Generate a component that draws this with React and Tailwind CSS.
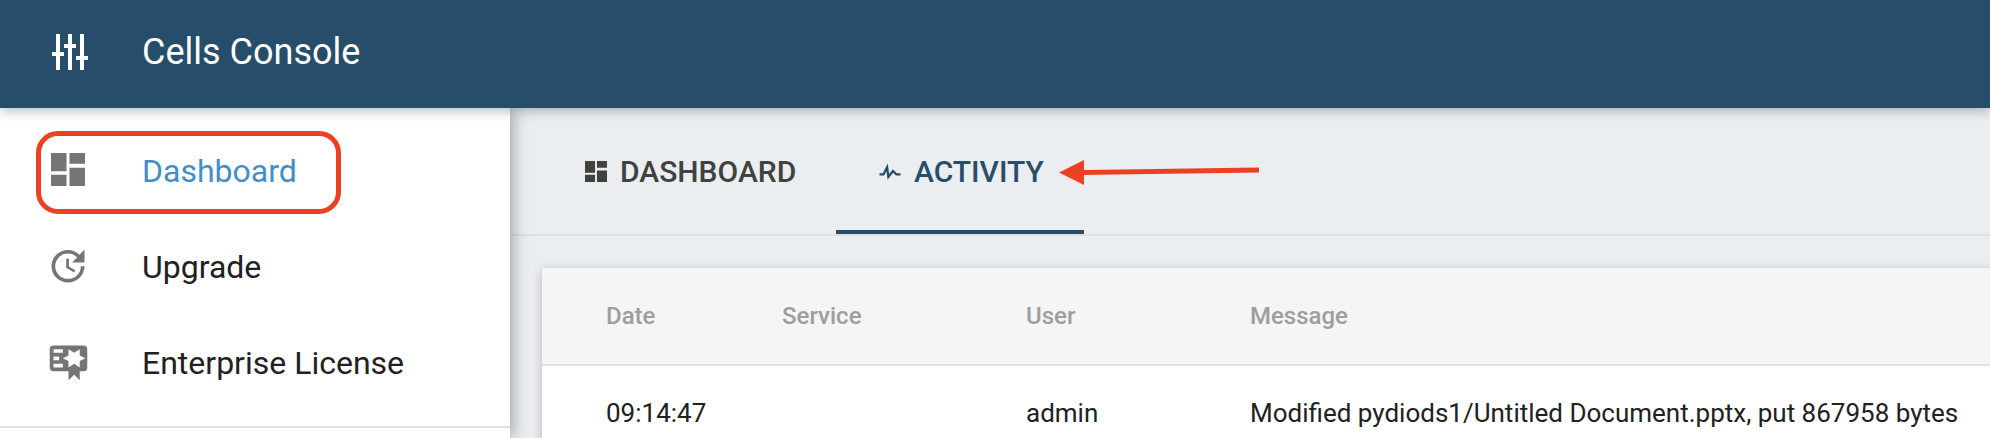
import React from "react";

const menuText = "text-[32px] leading-none whitespace-nowrap";

function Tune() {
  return (
    <svg className="w-12 h-12 shrink-0" viewBox="0 0 24 24" fill="#fff">
      <path d="M5 3h2v9h2v2H7v7H5v-7H3v-2h2zM11 3h2v5h2v2h-2v11h-2V10H9V8h2zM17 3h2v11h2v2h-2v5h-2v-5h-2v-2h2z" />
    </svg>
  );
}

function DashboardIcon({ className }) {
  return (
    <svg className={className} viewBox="0 0 34 33" fill="currentColor" preserveAspectRatio="none">
      <path d="M0 0h15.5v18.3H0zM18.5 0H34v10.8H18.5zM0 21.8h15.5V33H0zM18.5 14.8H34V33H18.5z" />
    </svg>
  );
}

function MenuRow({ icon, label, className }) {
  return (
    <div className="flex h-24 items-center">
      <div className="flex w-[142px] shrink-0 pb-[3px] pl-[45px] text-[#757575]">{icon}</div>
      <span className={`${menuText} ${className}`}>{label}</span>
    </div>
  );
}

export default function App() {
  return (
    <div className="flex h-[438px] w-[1990px] flex-col overflow-hidden bg-[#eaeef1] font-[Roboto,sans-serif] text-[#212121]">
      <header className="relative z-20 flex h-[108px] shrink-0 items-center bg-[#264d69] pb-1 pl-[46px] text-white shadow-[0_2px_12px_rgba(0,0,0,0.3)]">
        <Tune />
        <span className="ml-[48px] text-[36px] leading-none">Cells Console</span>
      </header>
      <div className="flex min-h-0 flex-1">
        <aside className="relative z-10 w-[510px] shrink-0 bg-white shadow-[2px_0_16px_rgba(0,0,0,0.35)]">
          <div className="absolute left-[36px] top-[23px] h-[83px] w-[305px] rounded-[22px] border-[5px] border-[#ed4023]" />
          <nav className="flex h-[320px] flex-col border-b-2 border-[#e0e0e0] pt-[15px]">
            <MenuRow label="Dashboard" className="text-[#3f8fca]" icon={<DashboardIcon className="ml-1.5 h-[33px] w-[34px]" />} />
            <MenuRow
              label="Upgrade"
              icon={
                <svg className="ml-px h-[44px] w-[44px]" viewBox="0 0 24 24" fill="currentColor">
                  <path d="M21 10.12h-6.78l2.74-2.82c-2.73-2.7-7.15-2.8-9.88-.1-2.73 2.71-2.73 7.08 0 9.79s7.15 2.71 9.88 0C18.32 15.65 19 14.08 19 12.1h2c0 1.98-.88 4.55-2.64 6.29-3.51 3.48-9.21 3.48-12.72 0-3.5-3.47-3.53-9.11-.02-12.58s9.14-3.47 12.65 0L21 3zM12.5 8v4.25l3.5 2.08-.72 1.21L11 13V8z" />
                </svg>
              }
            />
            <MenuRow
              label="Enterprise License"
              icon={
                <svg className="ml-[0.5px] h-[44px] w-[45px]" viewBox="0 0 24 24" fill="currentColor" preserveAspectRatio="none">
                  <path d="M4 3a2 2 0 0 0-2 2v10a2 2 0 0 0 2 2h8v5l3-3 3 3v-5h2a2 2 0 0 0 2-2V5a2 2 0 0 0-2-2zm8 2 3 2 3-2v3.5l3 1.5-3 1.5V15l-3-2-3 2v-3.5L9 10l3-1.5zM4 5h5v2H4zm0 4h3v2H4zm0 4h5v2H4z" />
                </svg>
              }
            />
          </nav>
        </aside>
        <main className="flex min-w-0 flex-1 flex-col">
          <div className="flex h-[128px] shrink-0 border-b-2 border-[#e0e0e0] pl-[34px] text-[30px] font-medium leading-none">
            <div className="flex w-[292px] items-center pl-[41px] pt-px text-[#404240]">
              <DashboardIcon className="h-[21px] w-[22px]" />
              <span className="ml-[13px] pt-px">DASHBOARD</span>
            </div>
            <div className="relative flex w-[248px] items-center border-b-4 border-[#264d69] pl-10 pt-[5px] text-[#264d69]">
              <svg className="h-7 w-7" viewBox="0 0 24 24" fill="currentColor">
                <path d="M3 13h2.79l4.31-8.21 1.18 8.96 3.22-4.09L17.83 13H21v2h-4l-2.33-2.33-4.75 6.06-.98-7.42L7 15H3z" />
              </svg>
              <span className="ml-2.5 pt-px">ACTIVITY</span>
              <svg className="absolute left-[223px] top-[50px] h-[28px] w-[200px]" viewBox="0 0 200 28">
                <path d="M24 14.5L200 12" stroke="#ed4023" strokeWidth="5" />
                <path d="M0 14.5L25 2v25z" fill="#ed4023" />
              </svg>
            </div>
          </div>
          <div className="ml-8 mt-8 flex-1 bg-white shadow-[0_2px_10px_rgba(0,0,0,0.22)]">
            <div className="grid h-[98px] grid-cols-[176px_244px_224px_1fr] items-center border-b-2 border-[#e0e0e0] bg-[#f5f5f5] pl-16 text-[24px] font-medium leading-none text-[#9e9e9e]">
              <span>Date</span><span>Service</span><span>User</span><span>Message</span>
            </div>
            <div className="grid h-[94px] grid-cols-[176px_244px_224px_1fr] items-center whitespace-nowrap pl-16 text-[26px] leading-none">
              <span>09:14:47</span><span></span><span>admin</span>
              <span>Modified pydiods1/Untitled Document.pptx, put 867958 bytes</span>
            </div>
          </div>
        </main>
      </div>
    </div>
  );
}
